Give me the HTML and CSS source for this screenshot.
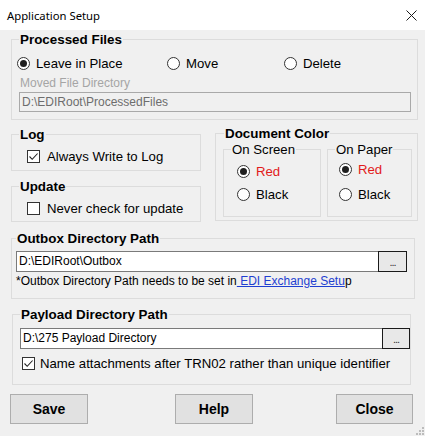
FILE: index.html
```html
<!DOCTYPE html>
<html>
<head>
<meta charset="utf-8">
<link rel="stylesheet" href="styles.css">
</head>
<body>
<div class="window">
  <div class="titlebar">
    <span class="title">Application Setup</span>
    <svg class="close" width="11" height="11" viewBox="0 0 11 11"><path d="M0.5 0.5 L10.5 10.5 M10.5 0.5 L0.5 10.5" stroke="#1a1a1a" stroke-width="1" fill="none"/></svg>
  </div>

  <div class="group g-processed">
    <div class="legend">Processed Files</div>
    <div class="radio-row">
      <div class="opt opt-leave"><span class="radio on"></span><span>Leave in Place</span></div>
      <div class="opt opt-move"><span class="radio"></span><span>Move</span></div>
      <div class="opt"><span class="radio"></span><span>Delete</span></div>
    </div>
    <div class="dim-label">Moved File Directory</div>
    <div class="field disabled">D:\EDIRoot\ProcessedFiles</div>
  </div>

  <div class="two-col">
    <div class="left-col">
      <div class="group g-log">
        <div class="legend">Log</div>
        <div class="check-row"><span class="check on"><svg width="11" height="11" viewBox="0 0 11 11"><path d="M1.5 5.5 L4.2 8.3 L9.6 2.5" stroke="#222" stroke-width="1.1" fill="none"/></svg></span><span>Always Write to Log</span></div>
      </div>
      <div class="group g-update">
        <div class="legend">Update</div>
        <div class="check-row"><span class="check"></span><span>Never check for update</span></div>
      </div>
    </div>
    <div class="group g-color">
      <div class="legend">Document Color</div>
      <div class="sub-row">
        <div class="group sub sub-screen">
          <div class="legend normal">On Screen</div>
          <div class="opt red-row"><span class="radio on"></span><span class="red">Red</span></div>
          <div class="opt black-row"><span class="radio"></span><span>Black</span></div>
        </div>
        <div class="group sub sub-paper">
          <div class="legend normal">On Paper</div>
          <div class="opt red-row"><span class="radio on"></span><span class="red">Red</span></div>
          <div class="opt black-row"><span class="radio"></span><span>Black</span></div>
        </div>
      </div>
    </div>
  </div>

  <div class="group g-outbox">
    <div class="legend">Outbox Directory Path</div>
    <div class="path-row">
      <div class="field white">D:\EDIRoot\Outbox</div>
      <div class="browse">...</div>
    </div>
    <div class="note">*Outbox Directory Path needs to be set in<span class="link"> EDI Exchange Setu</span>p</div>
  </div>

  <div class="group g-payload">
    <div class="legend">Payload Directory Path</div>
    <div class="path-row">
      <div class="field white">D:\275 Payload Directory</div>
      <div class="browse">...</div>
    </div>
    <div class="check-row"><span class="check on"><svg width="11" height="11" viewBox="0 0 11 11"><path d="M1.5 5.5 L4.2 8.3 L9.6 2.5" stroke="#222" stroke-width="1.1" fill="none"/></svg></span><span>Name attachments after TRN02 rather than unique identifier</span></div>
  </div>

  <div class="buttons">
    <div class="btn btn-save">Save</div>
    <div class="btn btn-help">Help</div>
    <div class="btn btn-close">Close</div>
  </div>

  <svg class="grip" width="8" height="8" viewBox="0 0 8 8">
    <rect x="6" y="0" width="2" height="2" fill="#bcbcbc"/>
    <rect x="3" y="3" width="2" height="2" fill="#bcbcbc"/>
    <rect x="6" y="3" width="2" height="2" fill="#bcbcbc"/>
    <rect x="0" y="6" width="2" height="2" fill="#bcbcbc"/>
    <rect x="3" y="6" width="2" height="2" fill="#bcbcbc"/>
    <rect x="6" y="6" width="2" height="2" fill="#bcbcbc"/>
  </svg>
</div>
</body>
</html>
```

FILE: styles.css
```css
* { box-sizing: border-box; }
html, body { margin: 0; padding: 0; }
body {
  background: #f0f0f0;
  font-family: "Liberation Sans", Arial, sans-serif;
  font-size: 13.2px;
  color: #000;
}
.window {
  position: relative;
  width: 425px;
  height: 436px;
  background: #f0f0f0;
  overflow: hidden;
}
.titlebar {
  height: 30px;
  background: #fff;
  display: flex;
  align-items: center;
  padding: 0 0 0 7px;
}
.title {
  font-family: "Noto Sans", "Open Sans", sans-serif;
  font-size: 11.3px;
  color: #000;
}
.close { margin-left: auto; margin-right: 8px; }

.group {
  border: 1px solid #dcdcdc;
}
.legend {
  display: block;
  width: fit-content;
  font-weight: bold;
  font-size: 13.4px;
  line-height: 16px;
  height: 16px;
  margin-top: -8px;
  background: #f0f0f0;
  padding: 0 1px;
}
.legend.normal { font-weight: normal; font-size: 13.2px; }

.g-processed {
  margin: 9px 0 0 11px;
  width: 407px;
  height: 81px;
}
.g-processed .legend { margin-left: 7px; }
.radio-row {
  display: flex;
  margin-top: 7px;
  padding-left: 5px;
  height: 16px;
  align-items: center;
}
.opt { display: flex; align-items: center; height: 16px; }
.opt-leave { width: 150px; }
.opt-move { width: 117px; }
.radio {
  width: 13px;
  height: 13px;
  border: 1px solid #333;
  border-radius: 50%;
  background: #fff;
  margin-right: 6px;
  display: flex;
  align-items: center;
  justify-content: center;
  flex: none;
}
.radio.on::after {
  content: "";
  width: 7px;
  height: 7px;
  border-radius: 50%;
  background: #1f1f1f;
}
.dim-label {
  margin: 5px 0 0 8px;
  font-size: 12px;
  line-height: 14px;
  color: #a5a5a5;
}
.field {
  font-size: 12px;
  line-height: 18px;
  height: 20px;
  padding: 0 2px;
  white-space: nowrap;
  overflow: hidden;
}
.field.disabled {
  margin: 2px 0 0 7px;
  width: 392px;
  background: #f0f0f0;
  border: 1px solid #a9a9a9;
  color: #6d6d6d;
}
.field.white {
  background: #fff;
  border: 1px solid #7a7a7a;
  border-right: none;
  height: 21px;
  line-height: 19px;
}

.two-col {
  display: flex;
  align-items: flex-start;
  margin-top: 13px;
}
.left-col { margin-left: 11px; margin-top: 1px; width: 190px; }
.g-log { width: 190px; height: 37px; }
.g-update { width: 190px; height: 36px; margin-top: 15px; }
.g-log .legend, .g-update .legend { margin-left: 7px; }
.check-row {
  display: flex;
  align-items: center;
  height: 16px;
}
.g-log .check-row, .g-update .check-row { margin-top: 5px; padding-left: 15px; }
.check {
  width: 13px;
  height: 13px;
  border: 1px solid #333;
  background: #fff;
  margin-right: 7px;
  flex: none;
  display: flex;
  align-items: center;
  justify-content: center;
}
.check svg { display: block; }

.g-color {
  margin-left: 14px;
  width: 203px;
  height: 88px;
}
.g-color > .legend { margin-left: 8px; }
.sub-row {
  display: flex;
  margin: 7px 0 0 7px;
  gap: 6px;
}
.sub { height: 68px; }
.sub-screen { width: 98px; }
.sub-paper { width: 85px; }
.sub .legend { margin-left: 7px; }
.sub-screen .opt { padding-left: 13px; }
.sub-paper .opt { padding-left: 11px; }
.sub-screen .red-row { margin-top: 5px; }
.sub-screen .black-row { margin-top: 7px; }
.sub-paper .red-row { margin-top: 3px; }
.sub-paper .black-row { margin-top: 9px; }
.red { color: #e21b1b; }

.g-outbox {
  margin: 16px 0 0 11px;
  width: 404px;
  height: 61px;
}
.g-outbox .legend { margin-left: 4px; }
.path-row { display: flex; height: 21px; }
.g-outbox .path-row { margin: 4px 0 0 4px; }
.g-outbox .field { width: 362px; }
.browse {
  width: 29px;
  height: 21px;
  border: 1px solid #1a1a1a;
  background: #e8e8e8;
  font-size: 11px;
  line-height: 21px;
  text-align: center;
  letter-spacing: -1px;
  color: #333;
}
.note {
  margin: 2px 0 0 4px;
  font-size: 12px;
  line-height: 14px;
  white-space: nowrap;
}
.link { color: #1f3fd1; text-decoration: underline; }

.g-payload {
  margin: 15px 0 0 12px;
  width: 399px;
  height: 71px;
}
.g-payload .legend { margin-left: 7px; }
.g-payload .path-row { margin: 5px 0 0 7px; }
.g-payload .field { width: 362px; }
.g-payload .browse { width: 28px; }
.g-payload .check-row { margin-top: 6px; padding-left: 9px; }
.g-payload .check { margin-right: 5px; }

.buttons {
  display: flex;
  margin-top: 9px;
}
.btn {
  width: 78px;
  height: 30px;
  border: 1px solid #adadad;
  background: #e1e1e1;
  font-weight: bold;
  font-size: 14px;
  line-height: 28px;
  text-align: center;
}
.btn-save { margin-left: 10px; }
.btn-help { margin-left: 87px; }
.btn-close { margin-left: 83px; width: 77px; }

.grip { position: absolute; right: 1px; bottom: 1px; }
```
